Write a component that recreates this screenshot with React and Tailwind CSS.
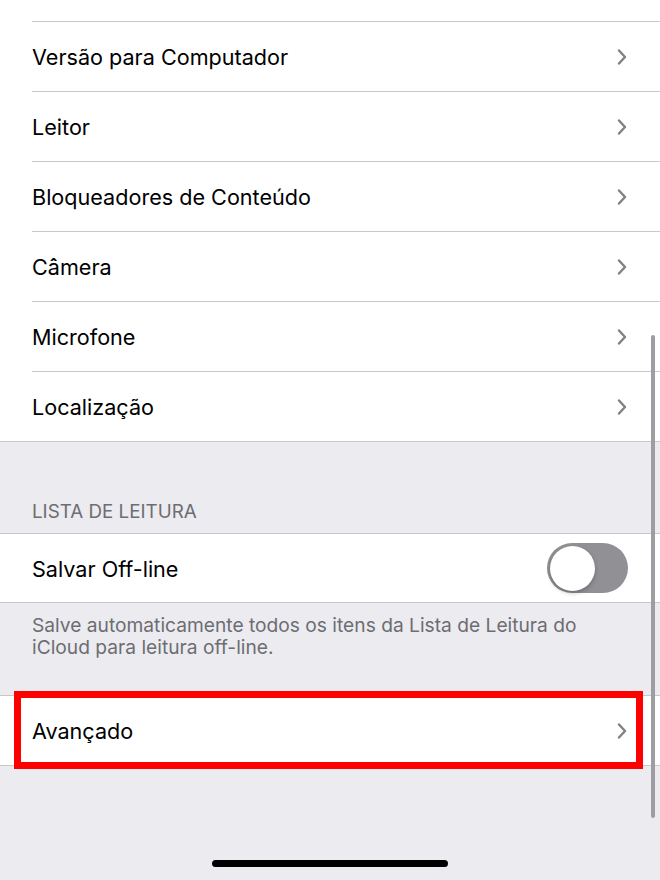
import React from 'react';

const Chevron = () => (
  <svg width="10" height="16" viewBox="0 0 10 16" fill="none" className="shrink-0">
    <path d="M2 1.5 L8 8 L2 14.5" stroke="#808086" strokeWidth="2.4" strokeLinecap="round" strokeLinejoin="round" />
  </svg>
);

const Row = ({ label }) => (
  <div className="pl-8">
    <div className="h-[70px] flex items-center justify-between pr-[33px] border-t border-[#c8c7cc]">
      <span className="text-[21.6px] pt-[2px] text-black">{label}</span>
      <Chevron />
    </div>
  </div>
);

const Toggle = () => (
  <div className="w-[81px] h-[50px] rounded-full bg-[#909095] p-[2.5px] flex items-center">
    <div className="w-[45px] h-[45px] rounded-full bg-white shadow-[0_2px_4px_rgba(0,0,0,0.25)]" />
  </div>
);

const App = () => {
  const rows = ['Versão para Computador', 'Leitor', 'Bloqueadores de Conteúdo', 'Câmera', 'Microfone', 'Localização'];

  return (
    <div className="relative w-[660px] h-[880px] overflow-hidden bg-[#ebebf0]" style={{ fontFamily: 'Inter, "Noto Sans", sans-serif' }}>
      {/* top group */}
      <div className="bg-white border-b border-[#c8c7cc]">
        <div className="h-[21px]" />
        {rows.map((r) => (
          <Row key={r} label={r} />
        ))}
      </div>

      {/* reading list header */}
      <div className="h-[91px] flex items-end pl-8 pb-[10px]">
        <span className="text-[18.8px] leading-[22px] text-[#6d6d72]">LISTA DE LEITURA</span>
      </div>

      <div className="bg-white border-y border-[#c8c7cc] h-[70px] flex items-center justify-between pl-8 pr-8">
        <span className="text-[21.6px] pt-[2px] text-black">Salvar Off-line</span>
        <Toggle />
      </div>

      <div className="pl-8 pr-8 pt-[11px] pb-[37px] text-[19.2px] leading-[22px] text-[#6d6d72]">
        Salve automaticamente todos os itens da Lista de Leitura do iCloud para leitura off-line.
      </div>

      {/* advanced */}
      <div className="relative bg-white border-y border-[#c8c7cc] h-[71px] flex items-center justify-between pl-8 pr-[33px]">
        <span className="text-[21.6px] pt-[2px] text-black">Avançado</span>
        <Chevron />
        <div className="absolute left-[14px] top-[-5px] w-[629px] h-[78px] border-[7px] border-[#ff0000]" />
      </div>

      {/* scroll indicator */}
      <div className="absolute left-[651px] top-[335px] w-[3.5px] h-[483px] rounded-full bg-[#9d9da2]" />

      {/* home indicator */}
      <div className="absolute left-[212px] top-[860px] w-[236px] h-[7px] rounded-full bg-black" />
    </div>
  );
};

export default App;
